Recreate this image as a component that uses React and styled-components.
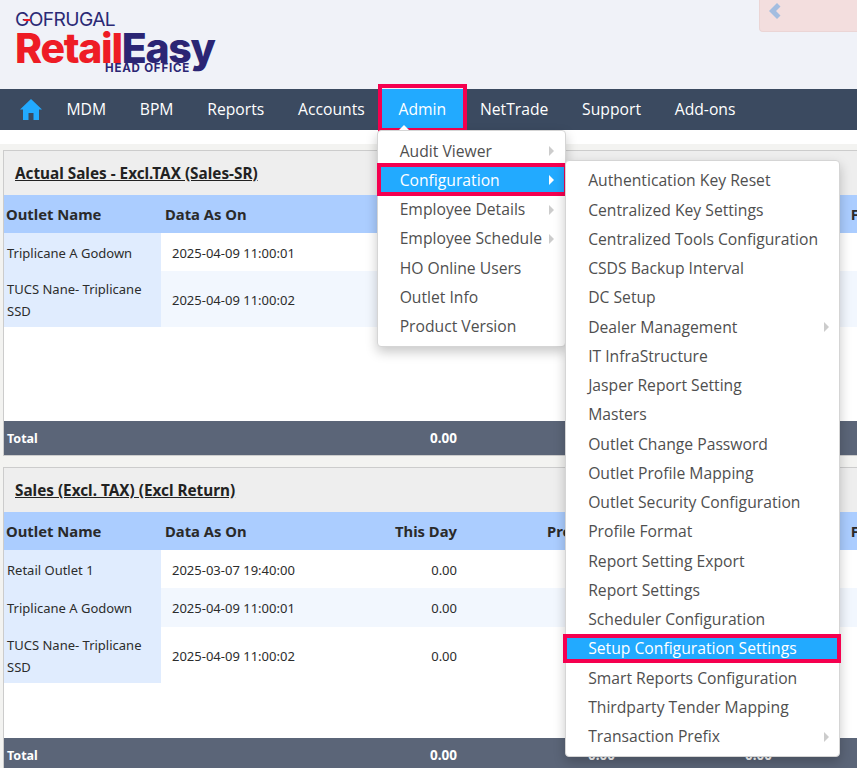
import styled, { createGlobalStyle } from "styled-components";

const GlobalStyle = createGlobalStyle`
  html, body {
    margin: 0;
    padding: 0;
    height: 768px;
    overflow: hidden;
    background: #ffffff;
    font-family: "Open Sans", sans-serif;
  }
`;

const Page = styled.div`
  width: 857px;
  height: 768px;
  overflow: hidden;
  display: flex;
  flex-direction: column;
`;

// Header
const Header = styled.header`
  height: 89px;
  flex-shrink: 0;
  background: #f0f2f8;
  display: flex;
  justify-content: space-between;
  align-items: flex-start;
`;

const Logo = styled.div`
  display: flex;
  flex-direction: column;
  padding: 11px 0 0 15px;
`;

const LogoTop = styled.div`
  position: relative;
  font-family: "Inter", sans-serif;
  font-size: 19.2px;
  line-height: 17px;
  font-weight: 400;
  letter-spacing: -0.6px;
  color: #2b2a75;
`;

const LogoDash = styled.span`
  position: absolute;
  left: 9px;
  top: 8px;
  width: 7px;
  height: 2px;
  background: #ee1c25;
`;

const LogoMain = styled.div`
  font-family: "Inter", sans-serif;
  font-size: 41px;
  line-height: 38px;
  font-weight: 800;
  letter-spacing: -1.3px;
  color: #2b2574;
  margin-top: 1px;
`;

const LogoRed = styled.span`
  color: #ee1c25;
`;

const LogoSub = styled.div`
  font-family: "Inter", sans-serif;
  font-size: 11.5px;
  line-height: 12px;
  font-weight: 700;
  letter-spacing: 0.8px;
  color: #2b2574;
  margin: -5px 0 0 90px;
`;

const CollapseTab = styled.div`
  width: 106px;
  height: 28px;
  background: #f3dede;
  border-left: 1px solid #ebd5d5;
  border-bottom: 1px solid #ebd5d5;
  border-bottom-left-radius: 4px;
  display: flex;
  align-items: flex-start;
  padding: 3px 0 0 8px;
  margin-right: -17px;
`;

// Nav
const Nav = styled.nav`
  height: 41px;
  flex-shrink: 0;
  background: #3b4a60;
  display: flex;
  align-items: stretch;
  position: relative;
  z-index: 5;
`;

const HomeLink = styled.a`
  width: 49.5px;
  padding-left: 20px;
  box-sizing: border-box;
  display: flex;
  align-items: center;
`;

const NavItem = styled.div`
  position: relative;
  display: flex;
  align-items: center;
  padding: 0 16.9px 2px;
  font-size: 15.7px;
  color: #ffffff;
  background: ${(p) => (p.$active ? "#22aaff" : "transparent")};

  ${(p) =>
    p.$active &&
    `
    &::before {
      content: "";
      position: absolute;
      inset: -5px -4px -2px -4px;
      border: 4px solid #f5004f;
      pointer-events: none;
    }
    &::after {
      content: "";
      position: absolute;
      left: 17px;
      bottom: 0;
      border: 5px solid transparent;
      border-top: 0;
      border-bottom-color: #ffffff;
    }
  `}
`;

const Menu = styled.div`
  position: absolute;
  top: ${(p) => p.$top}px;
  left: ${(p) => p.$left}px;
  width: ${(p) => p.$width}px;
  box-sizing: border-box;
  padding: 5px 0;
  background: #ffffff;
  border: 1px solid #d5d5d5;
  border-radius: 4px;
  box-shadow: 0 5px 12px rgba(0, 0, 0, 0.22);
`;

const MenuRow = styled.div`
  position: relative;
  height: 29.25px;
  display: flex;
  align-items: center;
  padding-left: ${(p) => p.$indent}px;
  font-size: 15.7px;
  white-space: nowrap;
  color: ${(p) => (p.$active ? "#ffffff" : "#4f4f4f")};
  background: ${(p) => (p.$active ? "#22aaff" : "transparent")};

  ${(p) =>
    p.$mark &&
    `
    &::before {
      content: "";
      position: absolute;
      inset: ${p.$mark};
      border: 4px solid #f5004f;
      pointer-events: none;
    }
  `}
`;

const Arrow = styled.span`
  position: absolute;
  right: ${(p) => p.$right}px;
  top: 10px;
  border-top: 5px solid transparent;
  border-bottom: 5px solid transparent;
  border-left: 5px solid ${(p) => (p.$active ? "#ffffff" : "#cccccc")};
`;

// Dashboard
const Content = styled.main`
  flex: 1;
  padding-top: 14px;
  background: #ffffff;
`;

const Panels = styled.div`
  background: #f3f3f1;
  padding: 6px 0 0 3px;
  height: 100%;
  display: flex;
  flex-direction: column;
  gap: 11px;
`;

const Panel = styled.section`
  width: 940px;
  flex-shrink: 0;
  border: 1px solid #cccccc;
  background: #ffffff;
  font-family: "Noto Sans", sans-serif;
`;

const PanelTitle = styled.div`
  height: 44px;
  display: flex;
  align-items: center;
  padding-left: 11px;
  background: #eeeeee;
  font-size: 15.3px;
  font-weight: 700;
  color: #222222;
  text-decoration: underline;
`;

const Row = styled.div`
  display: grid;
  grid-template-columns: 157px 160px 142px 158px 157px 164px;
  min-height: ${(p) => p.$height}px;
  background: ${(p) => (p.$tinted ? "#f2f7fe" : "transparent")};
`;

const HeadRow = styled(Row)`
  background: #abcdff;
  font-size: 14.8px;
  font-weight: 700;
  color: #2a2a2a;
  align-items: center;
`;

const TotalRow = styled(Row)`
  background: #5b6578;
  font-size: 12.5px;
  font-weight: 700;
  color: #ffffff;
  align-items: center;
`;

const RowsArea = styled.div`
  height: 188px;
`;

const Cell = styled.div`
  display: flex;
  align-items: center;
  font-size: 13px;
  line-height: 22px;
  color: #2c2c2c;
  padding: 1.5px ${(p) => (p.$right ? "6px" : "0")} 0 ${(p) => (p.$date ? "11px" : "3px")};
  justify-content: ${(p) => (p.$right ? "flex-end" : "flex-start")};
  background: ${(p) => (p.$outlet ? "#e0ecfe" : "transparent")};
`;

const HeadCell = styled.div`
  padding: 0 ${(p) => (p.$right ? "6px" : "0")} 0 ${(p) => (p.$first ? "2px" : p.$right ? "0" : "4px")};
  text-align: ${(p) => (p.$right ? "right" : "left")};
  white-space: nowrap;
`;

const TotalCell = styled.div`
  padding: 0 6px 0 3px;
  font-size: ${(p) => (p.$right ? "13.5px" : "12.5px")};
  text-align: ${(p) => (p.$right ? "right" : "left")};
`;

const subMenuItems = [
  "Authentication Key Reset",
  "Centralized Key Settings",
  "Centralized Tools Configuration",
  "CSDS Backup Interval",
  "DC Setup",
  "Dealer Management",
  "IT InfraStructure",
  "Jasper Report Setting",
  "Masters",
  "Outlet Change Password",
  "Outlet Profile Mapping",
  "Outlet Security Configuration",
  "Profile Format",
  "Report Setting Export",
  "Report Settings",
  "Scheduler Configuration",
  "Setup Configuration Settings",
  "Smart Reports Configuration",
  "Thirdparty Tender Mapping",
  "Transaction Prefix",
];

const subMenuArrows = ["Dealer Management", "Transaction Prefix"];

const adminItems = [
  { label: "Audit Viewer", arrow: true },
  { label: "Configuration", arrow: true, active: true },
  { label: "Employee Details", arrow: true },
  { label: "Employee Schedule", arrow: true },
  { label: "HO Online Users" },
  { label: "Outlet Info" },
  { label: "Product Version" },
];

const panels = [
  {
    title: "Actual Sales - Excl.TAX (Sales-SR)",
    rows: [
      { name: "Triplicane A Godown", date: "2025-04-09 11:00:01", height: 38 },
      { name: "TUCS Nane- Triplicane SSD", date: "2025-04-09 11:00:02", height: 56 },
    ],
  },
  {
    title: "Sales (Excl. TAX) (Excl Return)",
    rows: [
      { name: "Retail Outlet 1", date: "2025-03-07 19:40:00", height: 38 },
      { name: "Triplicane A Godown", date: "2025-04-09 11:00:01", height: 39 },
      { name: "TUCS Nane- Triplicane SSD", date: "2025-04-09 11:00:02", height: 56 },
    ],
  },
];

const HomeIcon = () => (
  <svg width="22" height="21" viewBox="0 0 22 21">
    <path d="M11 0 L22 10.5 H19 V21 H13.5 V14 H8.5 V21 H3 V10.5 H0 Z" fill="#22aaff" />
  </svg>
);

const ChevronLeft = () => (
  <svg width="13" height="16" viewBox="0 0 13 16">
    <path d="M9 0 L12.5 3.5 L8 8 L12.5 12.5 L9 16 L1 8 Z" fill="#a3bde0" />
  </svg>
);

const SubMenu = () => (
  <Menu $top={-5.5} $left={187.5} $width={275}>
    {subMenuItems.map((item) => {
      const active = item === "Setup Configuration Settings";
      return (
        <MenuRow key={item} $indent={22} $active={active} $mark={active ? "0 -2px 0 -3px" : null}>
          {item}
          {subMenuArrows.includes(item) && <Arrow $right={10} />}
        </MenuRow>
      );
    })}
  </Menu>
);

const AdminMenu = () => (
  <Menu $top={41} $left={-5} $width={189}>
    {adminItems.map((item) => (
      <MenuRow
        key={item.label}
        $indent={22}
        $active={item.active}
        $mark={item.active ? "-2px -3px -1px -1px" : null}
      >
        {item.label}
        {item.arrow && <Arrow $right={11} $active={item.active} />}
        {item.active && <SubMenu />}
      </MenuRow>
    ))}
  </Menu>
);

const SalesPanel = ({ title, rows }) => (
  <Panel>
    <PanelTitle>{title}</PanelTitle>
    <HeadRow $height={38}>
      <HeadCell $first>Outlet Name</HeadCell>
      <HeadCell>Data As On</HeadCell>
      <HeadCell $right>This Day</HeadCell>
      <HeadCell $right>Prev. Day</HeadCell>
      <HeadCell $right>This Month</HeadCell>
      <HeadCell $right>Financial Yr</HeadCell>
    </HeadRow>
    <RowsArea>
      {rows.map((row, i) => (
        <Row key={row.name} $height={row.height} $tinted={i % 2 === 1}>
          <Cell $outlet>{row.name}</Cell>
          <Cell $date>{row.date}</Cell>
          <Cell $right>0.00</Cell>
          <Cell $right>0.00</Cell>
          <Cell $right>0.00</Cell>
          <Cell $right>0.00</Cell>
        </Row>
      ))}
    </RowsArea>
    <TotalRow $height={34}>
      <TotalCell>Total</TotalCell>
      <TotalCell />
      <TotalCell $right>0.00</TotalCell>
      <TotalCell $right>0.00</TotalCell>
      <TotalCell $right>0.00</TotalCell>
      <TotalCell $right>0.00</TotalCell>
    </TotalRow>
  </Panel>
);

const App = () => {
  return (
    <Page>
      <GlobalStyle />
      <Header>
        <Logo>
          <LogoTop>
            GOFRUGAL
            <LogoDash />
          </LogoTop>
          <LogoMain>
            <LogoRed>Retail</LogoRed>Easy
          </LogoMain>
          <LogoSub>HEAD OFFICE</LogoSub>
        </Logo>
        <CollapseTab>
          <ChevronLeft />
        </CollapseTab>
      </Header>
      <Nav>
        <HomeLink>
          <HomeIcon />
        </HomeLink>
        <NavItem>MDM</NavItem>
        <NavItem>BPM</NavItem>
        <NavItem>Reports</NavItem>
        <NavItem>Accounts</NavItem>
        <NavItem $active>
          Admin
          <AdminMenu />
        </NavItem>
        <NavItem>NetTrade</NavItem>
        <NavItem>Support</NavItem>
        <NavItem>Add-ons</NavItem>
      </Nav>
      <Content>
        <Panels>
          {panels.map((panel) => (
            <SalesPanel key={panel.title} title={panel.title} rows={panel.rows} />
          ))}
        </Panels>
      </Content>
    </Page>
  );
};

export default App;
